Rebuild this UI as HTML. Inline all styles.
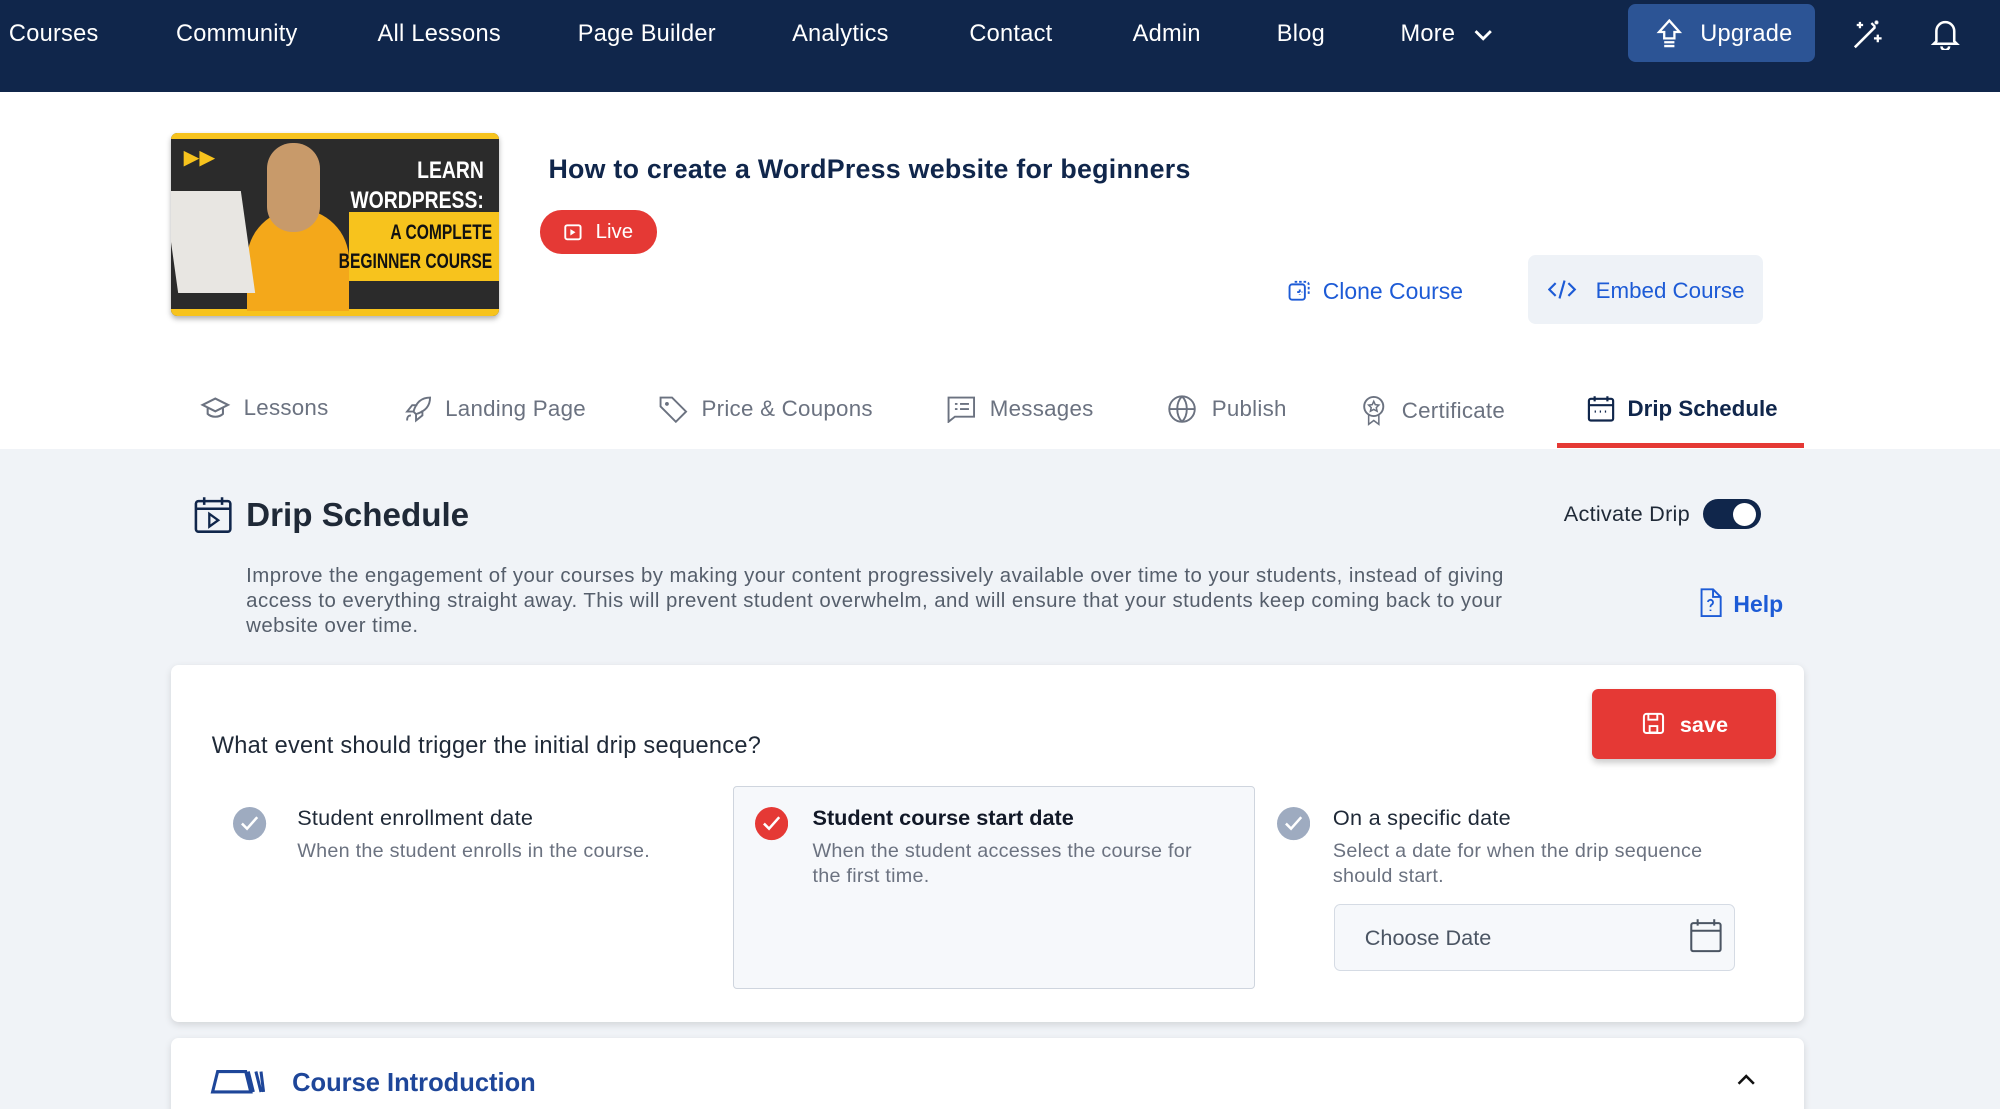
<!DOCTYPE html>
<html><head><meta charset="utf-8">
<style>
*{box-sizing:border-box;margin:0;padding:0}
html,body{width:2000px;height:1109px;overflow:hidden;background:#f0f3f7}
#root{zoom:1.27551;width:1568px;height:870px;position:relative;font-family:"Liberation Sans",sans-serif;background:#f0f3f7}
.abs{position:absolute}
.nav{left:0;top:0;width:1568px;height:72px;background:#10264b}
.nav span{position:absolute;top:16px;color:#fff;font-size:18.5px;letter-spacing:.2px}
.top{left:0;top:72px;width:1568px;height:280px;background:#fff}
.tab{position:absolute;top:310px;font-size:17.5px;color:#6b7280;display:flex;align-items:center;letter-spacing:.2px}
.tab svg{margin-right:10px}
.card{background:#fff;border-radius:6px;box-shadow:0 2px 6px rgba(0,0,0,.12)}
.opt-t{font-size:17px;color:#1f2937;letter-spacing:.2px}
.opt-d{font-size:15.5px;color:#6b7280;line-height:19.5px;letter-spacing:.2px}
</style></head><body><div id="root">
<div class="abs nav">
<span style="left:7px">Courses</span><span style="left:138px">Community</span><span style="left:296px">All Lessons</span><span style="left:453px">Page Builder</span><span style="left:621px">Analytics</span><span style="left:760px">Contact</span><span style="left:888px">Admin</span><span style="left:1001px">Blog</span><span style="left:1098px">More</span>
<svg class="abs" style="left:1155px;top:20px" width="16" height="14" viewBox="0 0 16 14"><path d="M2 4l6 6 6-6" stroke="#fff" stroke-width="2.2" fill="none"/></svg>
<div class="abs" style="left:1276px;top:3px;width:147px;height:46px;background:#2c5495;border-radius:6px"></div>
<svg class="abs" style="left:1297px;top:14px" width="24" height="24" viewBox="0 0 24 24"><path d="M12 2l8 9h-4v5H8v-5H4z" stroke="#fff" stroke-width="1.8" fill="none"/><path d="M8 19h8M8 22h8" stroke="#fff" stroke-width="1.8"/></svg>
<span style="left:1333px">Upgrade</span>
<svg class="abs" style="left:1451px;top:14px" width="26" height="26" viewBox="0 0 26 26"><path d="M3 23L19 7" stroke="#fff" stroke-width="2"/><path d="M16 4l3 3M21 13v6M18 16h6M7 3v5M4.5 5.5h5M20 2v3M18.5 3.5h3" stroke="#fff" stroke-width="1.8"/></svg>
<svg class="abs" style="left:1513px;top:13px" width="24" height="26" viewBox="0 0 24 26"><path d="M5 19V11a7 7 0 0 1 14 0v8l2 2H3z" stroke="#fff" stroke-width="2" fill="none"/><path d="M9 23a3 3 0 0 0 6 0" stroke="#fff" stroke-width="2" fill="none"/></svg>
</div>
<div class="abs top"></div>
<!-- thumbnail -->
<div class="abs" style="left:134px;top:104px;width:257px;height:144px;border-radius:5px;overflow:hidden;background:#2b2b2b;box-shadow:0 2px 4px rgba(0,0,0,.3)">
<div class="abs" style="left:0;top:0;width:257px;height:5px;background:#f7c31d"></div>
<div class="abs" style="left:0;bottom:0;width:257px;height:6px;background:#f7c31d"></div>
<div class="abs" style="left:60px;top:60px;width:80px;height:80px;background:#f4a81a;border-radius:40px 40px 0 0"></div>
<div class="abs" style="left:75px;top:8px;width:42px;height:70px;background:#c89a6a;border-radius:20px"></div>
<div class="abs" style="left:0;top:46px;width:60px;height:80px;background:#e8e6e2;transform:skewX(8deg)"></div>
<div class="abs" style="left:140px;top:62px;width:117px;height:54px;background:#f7c31d"></div>
<div class="abs" style="right:12px;top:18px;color:#fff;font-weight:bold;font-size:19px;text-align:right;line-height:24px;transform:scaleX(.8);transform-origin:right">LEARN<br>WORDPRESS:</div>
<div class="abs" style="right:5px;top:66px;color:#111;font-weight:bold;font-size:17px;text-align:right;line-height:23px;transform:scaleX(.72);transform-origin:right">A COMPLETE<br>BEGINNER COURSE</div>
<div class="abs" style="left:10px;top:10px;color:#f7c31d;font-size:16px">▶▶</div>
</div>
<div class="abs" style="left:430px;top:121px;font-size:21px;font-weight:bold;color:#10264b;letter-spacing:.2px">How to create a WordPress website for beginners</div>
<div class="abs" style="left:423px;top:165px;width:92px;height:34px;border-radius:17px;background:#e53935;color:#fff;font-size:16px;line-height:35px;padding-left:44px">Live</div>
<svg class="abs" style="left:442px;top:176px" width="14" height="13" viewBox="0 0 14 13"><rect x="1" y="1" width="12" height="11" rx="1.5" stroke="#fff" stroke-width="1.5" fill="none"/><path d="M5 4l4 2.5L5 9z" fill="#fff"/></svg>
<svg class="abs" style="left:1009px;top:218px" width="19" height="19" viewBox="0 0 19 19"><rect x="2" y="5" width="12" height="12" rx="2" stroke="#1d5bd6" stroke-width="1.5" fill="none"/><path d="M6 3h9a2 2 0 0 1 2 2v8M8 11h4M10 9v4" stroke="#1d5bd6" stroke-width="1.5" fill="none" stroke-dasharray="2 1.5"/></svg>
<div class="abs" style="left:1037px;top:218px;font-size:18px;color:#1d5bd6">Clone Course</div>
<div class="abs" style="left:1198px;top:200px;width:184px;height:54px;border-radius:6px;background:#eef2f7"></div>
<svg class="abs" style="left:1214px;top:218px" width="22" height="18" viewBox="0 0 22 18"><path d="M6 4L1 9l5 5M16 4l5 5-5 5M13 2L9 16" stroke="#1d5bd6" stroke-width="1.7" fill="none"/></svg>
<div class="abs" style="left:1251px;top:218px;font-size:17.5px;color:#1d5bd6">Embed Course</div>
<!-- tabs -->
<div class="tab" style="left:157px"><svg width="24" height="20" viewBox="0 0 24 20"><path d="M2 7l10-5 10 5-10 5z M6 9v5c3 3 9 3 12 0V9" stroke="#6b7280" stroke-width="1.6" fill="none"/></svg>Lessons</div>
<div class="tab" style="left:315px"><svg width="24" height="22" viewBox="0 0 24 22"><path d="M9 13c2-7 6-11 13-11-0 7-4 11-11 13zM9 13l-5 0 4-5 4 0M11 15v5l5-4v-4M4 20c0-3 1-4 3-4" stroke="#6b7280" stroke-width="1.5" fill="none"/></svg>Landing Page</div>
<div class="tab" style="left:516px"><svg width="24" height="22" viewBox="0 0 24 22"><path d="M2 2h9l11 11-8 8L2 9z" stroke="#6b7280" stroke-width="1.5" fill="none"/><circle cx="7" cy="7" r="1.5" fill="#6b7280"/></svg>Price &amp; Coupons</div>
<div class="tab" style="left:742px"><svg width="24" height="22" viewBox="0 0 24 22"><path d="M2 2h20v15H7l-5 4z M7 7h2M11 7h7M7 11h2M11 11h7" stroke="#6b7280" stroke-width="1.5" fill="none"/></svg>Messages</div>
<div class="tab" style="left:916px"><svg width="24" height="22" viewBox="0 0 24 22"><circle cx="11" cy="11" r="10" stroke="#6b7280" stroke-width="1.5" fill="none"/><path d="M1 11h20M11 1c-5 5-5 15 0 20M11 1c5 5 5 15 0 20" stroke="#6b7280" stroke-width="1.5" fill="none"/></svg>Publish</div>
<div class="tab" style="left:1067px"><svg width="22" height="24" viewBox="0 0 22 24"><circle cx="10" cy="9" r="7.5" stroke="#6b7280" stroke-width="1.5" fill="none"/><path d="M6 15v8l4-3 4 3v-8M10 5l1.2 2.6 2.8.3-2 2 .6 2.8-2.6-1.4-2.6 1.4.6-2.8-2-2 2.8-.3z" stroke="#6b7280" stroke-width="1.2" fill="none"/></svg>Certificate</div>
<div class="tab" style="left:1244px;color:#10264b;font-weight:bold;letter-spacing:0"><svg width="22" height="22" viewBox="0 0 22 22"><rect x="1.5" y="3" width="19" height="17" rx="1.5" stroke="#10264b" stroke-width="1.7" fill="none"/><path d="M1.5 8h19M6 1v4M16 1v4M6 13h1M10 13h1M14 13h1" stroke="#10264b" stroke-width="1.7"/></svg>Drip Schedule</div>
<div class="abs" style="left:1221px;top:347px;width:193px;height:4px;background:#e53935"></div>
<!-- section -->
<svg class="abs" style="left:152px;top:389px" width="30" height="30" viewBox="0 0 30 30"><rect x="1.5" y="4" width="27" height="24" rx="2" stroke="#10264b" stroke-width="2" fill="none"/><path d="M1.5 10h27M8 1v6M22 1v6" stroke="#10264b" stroke-width="2"/><path d="M12 14l7 5-7 5z" stroke="#10264b" stroke-width="1.8" fill="none"/></svg>
<div class="abs" style="left:193px;top:390px;font-size:26px;font-weight:bold;color:#1f2937">Drip Schedule</div>
<div class="abs" style="left:1226px;top:393px;font-size:17px;color:#1f2937;letter-spacing:.2px">Activate Drip</div>
<div class="abs" style="left:1335px;top:391px;width:46px;height:24px;border-radius:12px;background:#10264b"></div>
<div class="abs" style="left:1359px;top:394px;width:18px;height:18px;border-radius:9px;background:#fff"></div>
<div class="abs" style="left:193px;top:442px;width:1000px;font-size:16px;line-height:19.6px;color:#555e6b;letter-spacing:.35px">Improve the engagement of your courses by making your content progressively available over time to your students, instead of giving access to everything straight away. This will prevent student overwhelm, and will ensure that your students keep coming back to your website over time.</div>
<svg class="abs" style="left:1332px;top:461px" width="18" height="23" viewBox="0 0 18 23"><path d="M2 1h9l6 6v15H2z M11 1v6h6" stroke="#1d5bd6" stroke-width="1.5" fill="none"/><path d="M7 11a2 2 0 1 1 3 2c-1 .6-1 1-1 2M9 17v1" stroke="#1d5bd6" stroke-width="1.4" fill="none"/></svg>
<div class="abs" style="left:1359px;top:463px;font-size:18px;font-weight:bold;color:#1d5bd6">Help</div>
<!-- card -->
<div class="abs card" style="left:134px;top:521px;width:1280px;height:280px"></div>
<div class="abs" style="left:1248px;top:540px;width:144px;height:55px;border-radius:5px;background:#e53935;box-shadow:0 3px 5px rgba(0,0,0,.2)"></div>
<svg class="abs" style="left:1287px;top:558px" width="18" height="18" viewBox="0 0 18 18"><rect x="1.5" y="1.5" width="15" height="15" rx="2" stroke="#fff" stroke-width="1.6" fill="none"/><path d="M5 2v4h7V2M6 11h6v5H6z" stroke="#fff" stroke-width="1.5" fill="none"/></svg>
<div class="abs" style="left:1317px;top:558px;font-size:17px;font-weight:bold;color:#fff">save</div>
<div class="abs" style="left:166px;top:574px;font-size:18.5px;color:#1f2937;letter-spacing:.2px">What event should trigger the initial drip sequence?</div>
<div class="abs" style="left:575px;top:616px;width:409px;height:159px;background:#f6f8fb;border:1px solid #cfd5de;border-radius:3px"></div>
<svg class="abs" style="left:183px;top:633px" width="26" height="26" viewBox="0 0 26 26"><circle cx="13" cy="13" r="13" fill="#9eabc0"/><path d="M7 13l4 4 8-9" stroke="#fff" stroke-width="2" fill="none"/></svg>
<svg class="abs" style="left:592px;top:633px" width="26" height="26" viewBox="0 0 26 26"><circle cx="13" cy="13" r="13" fill="#e53935"/><path d="M7 13l4 4 8-9" stroke="#fff" stroke-width="2" fill="none"/></svg>
<svg class="abs" style="left:1001px;top:633px" width="26" height="26" viewBox="0 0 26 26"><circle cx="13" cy="13" r="13" fill="#9eabc0"/><path d="M7 13l4 4 8-9" stroke="#fff" stroke-width="2" fill="none"/></svg>
<div class="abs opt-t" style="left:233px;top:631px">Student enrollment date</div>
<div class="abs opt-d" style="left:233px;top:658px">When the student enrolls in the course.</div>
<div class="abs opt-t" style="left:637px;top:631px;color:#111827;font-weight:bold;letter-spacing:0">Student course start date</div>
<div class="abs opt-d" style="left:637px;top:658px;width:300px">When the student accesses the course for the first time.</div>
<div class="abs opt-t" style="left:1045px;top:631px">On a specific date</div>
<div class="abs opt-d" style="left:1045px;top:658px;width:320px">Select a date for when the drip sequence should start.</div>
<div class="abs" style="left:1046px;top:709px;width:314px;height:52px;background:#f6f8fb;border:1px solid #d5dbe4;border-radius:5px"></div>
<div class="abs" style="left:1070px;top:725px;font-size:17px;color:#4b5563">Choose Date</div>
<svg class="abs" style="left:1325px;top:720px" width="25" height="27" viewBox="0 0 25 27"><rect x="1" y="4" width="23" height="22" rx="1.5" stroke="#4b5563" stroke-width="1.6" fill="none"/><path d="M1 10h23M6 1v5M19 1v5" stroke="#4b5563" stroke-width="1.6"/></svg>
<!-- card 2 -->
<div class="abs card" style="left:134px;top:814px;width:1280px;height:80px"></div>
<svg class="abs" style="left:165px;top:838px" width="44" height="20" viewBox="0 0 44 20"><path d="M2 18L6 2h22l4 16zM30 2l4 16M36 2l4 16M40 2l2 16" stroke="#1e4699" stroke-width="2.4" fill="none"/></svg>
<div class="abs" style="left:229px;top:838px;font-size:20px;font-weight:bold;color:#1e4699">Course Introduction</div>
<svg class="abs" style="left:1361px;top:840px" width="16" height="12" viewBox="0 0 16 12"><path d="M2 10l6-6 6 6" stroke="#111" stroke-width="2" fill="none"/></svg>
</div></body></html>
